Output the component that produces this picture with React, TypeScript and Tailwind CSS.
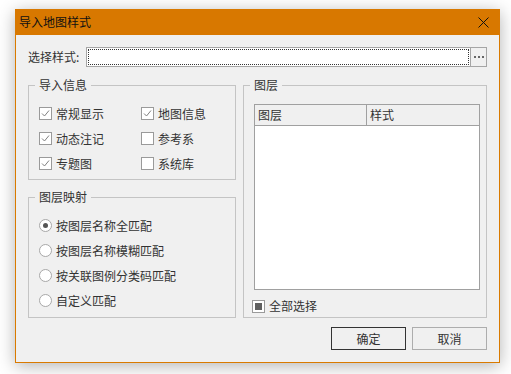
import React from 'react';

function CheckBox({ checked }: { checked?: boolean }) {
  return (
    <span className="flex h-[13px] w-[13px] shrink-0 items-center justify-center border border-[#9a9a9a] bg-white">
      {checked && (
        <svg width="9" height="9" viewBox="0 0 9 9">
          <path d="M1 4.5 L3.5 7 L8 1.5" fill="none" stroke="#808080" strokeWidth="1" />
        </svg>
      )}
    </span>
  );
}

function Radio({ checked }: { checked?: boolean }) {
  return (
    <span className="flex h-[13px] w-[13px] shrink-0 items-center justify-center rounded-full border border-[#a8a8a8] bg-white">
      {checked && <span className="h-[5px] w-[5px] rounded-full bg-[#555]" />}
    </span>
  );
}

const infoItems: [string, boolean][] = [
  ['常规显示', true],
  ['地图信息', true],
  ['动态注记', true],
  ['参考系', false],
  ['专题图', true],
  ['系统库', false],
];

const mappings = ['按图层名称全匹配', '按图层名称模糊匹配', '按关联图例分类码匹配', '自定义匹配'];

export default function App() {
  return (
    <div className="h-[374px] w-[511px] overflow-hidden bg-white pl-[15px] pt-[9px] font-['Microsoft_YaHei','Noto_Sans_CJK_SC',sans-serif] text-[12px] leading-[16px] text-[#333]">
      <div className="flex h-[354px] w-[485px] flex-col border border-t-0 border-[#d97a00] bg-[#f0f0f0] shadow-[0_3px_16px_rgba(0,0,0,0.3)]">
        {/* title bar */}
        <div className="-mx-px flex h-[26px] items-center justify-between bg-[#d87800] pl-[4px] pr-[11px]">
          <span className="text-[#111]">导入地图样式</span>
          <svg width="11" height="11" viewBox="0 0 11 11">
            <path d="M0.5 0.5 L10.5 10.5 M10.5 0.5 L0.5 10.5" stroke="#111" strokeWidth="1" />
          </svg>
        </div>

        <div className="flex flex-1 flex-col px-3 pb-3 pt-3">
          {/* style file row */}
          <div className="flex h-[20px] items-center">
            <span className="w-[58px] shrink-0">选择样式:</span>
            <div className="h-full flex-1 border border-[#a5a5a5] bg-white p-px">
              <div className="h-full w-full border border-dotted border-[#333]" />
            </div>
            <div className="flex h-full w-[16px] items-center justify-center gap-[2px] border border-l-0 border-[#a5a5a5] bg-[#f0f0f0]">
              <span className="h-[2px] w-[2px] bg-[#666]" />
              <span className="h-[2px] w-[2px] bg-[#666]" />
              <span className="h-[2px] w-[2px] bg-[#666]" />
            </div>
          </div>

          <div className="mt-[10px] flex gap-[7px]">
            {/* left column */}
            <div className="flex w-[208px] flex-col gap-[9px]">
              <fieldset className="h-[103px] border border-[#c4c4c4] px-[6px]">
                <legend className="px-[4px]">导入信息</legend>
                <div className="grid grid-cols-[102px_1fr] pl-[4px] pt-[8px]">
                  {infoItems.map(([label, on]) => (
                    <div key={label} className="flex h-[25px] items-center gap-[4px]">
                      <CheckBox checked={on} />
                      <span>{label}</span>
                    </div>
                  ))}
                </div>
              </fieldset>

              <fieldset className="h-[129px] border border-[#c4c4c4] px-[6px]">
                <legend className="px-[4px]">图层映射</legend>
                <div className="flex flex-col pl-[4px] pt-[8px]">
                  {mappings.map((m, i) => (
                    <div key={m} className="flex h-[25px] items-center gap-[4px]">
                      <Radio checked={i === 0} />
                      <span>{m}</span>
                    </div>
                  ))}
                </div>
              </fieldset>
            </div>

            {/* right column */}
            <fieldset className="h-[241px] flex-1 border border-[#c4c4c4] px-[6px]">
              <legend className="px-[4px]">图层</legend>
              <div className="flex flex-col pl-[4px] pt-[11px]">
                <div className="flex h-[186px] flex-col border border-[#a0a0a0] bg-white">
                  <div className="flex h-[21px] border-b border-[#a0a0a0] bg-[#f0f0f0]">
                    <div className="flex w-[112px] items-center border-r border-[#a0a0a0] pl-[3px]">图层</div>
                    <div className="flex flex-1 items-center pl-[3px]">样式</div>
                  </div>
                </div>
                <div className="-ml-[2px] mt-[8px] flex items-center gap-[4px]">
                  <span className="flex h-[13px] w-[13px] items-center justify-center border border-[#9a9a9a] bg-white">
                    <span className="h-[7px] w-[7px] bg-[#606060]" />
                  </span>
                  <span>全部选择</span>
                </div>
              </div>
            </fieldset>
          </div>

          {/* buttons */}
          <div className="mt-[9px] flex justify-end gap-[6px]">
            <button className="h-[23px] w-[75px] border border-[#333] bg-[#f0f0f0]">确定</button>
            <button className="h-[23px] w-[75px] border border-[#adadad] bg-[#f0f0f0]">取消</button>
          </div>
        </div>
      </div>
    </div>
  );
}
